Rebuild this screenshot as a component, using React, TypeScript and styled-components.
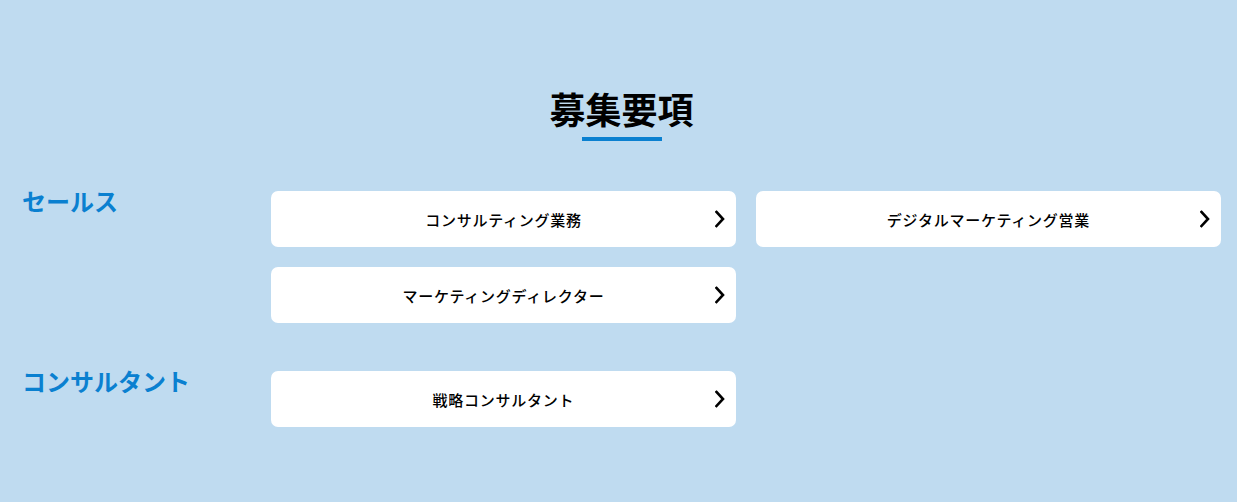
import React from 'react';
import styled, { createGlobalStyle } from 'styled-components';

interface IJobSection {
  category: string;
  jobs: string[];
}

const sections: IJobSection[] = [
  {
    category: 'セールス',
    jobs: ['コンサルティング業務', 'デジタルマーケティング営業', 'マーケティングディレクター'],
  },
  {
    category: 'コンサルタント',
    jobs: ['戦略コンサルタント'],
  },
];

const Chevron: React.FC = () => (
  <ChevronIcon width="10" height="18" viewBox="0 0 10 18" aria-hidden>
    <polyline
      points="1.5,2 8,9 1.5,16"
      fill="none"
      stroke="#000"
      strokeWidth="2.6"
      strokeLinecap="square"
      strokeLinejoin="miter"
    />
  </ChevronIcon>
);

export default function App() {
  return (
    <>
      <GlobalStyle />
      <Page>
        <Heading>
          <Title>募集要項</Title>
          <Underline />
        </Heading>

        {sections.map(section => (
          <Section key={section.category}>
            <Category>{section.category}</Category>
            <JobGrid>
              {section.jobs.map(job => (
                <JobCard key={job} href="#">
                  <JobName>{job}</JobName>
                  <Chevron />
                </JobCard>
              ))}
            </JobGrid>
          </Section>
        ))}
      </Page>
    </>
  );
}

const GlobalStyle = createGlobalStyle`
  body {
    margin: 0;
    background: #bfdbf0;
    font-family: 'Noto Sans CJK JP', 'Noto Sans', sans-serif;
  }
`;

const Page = styled.main`
  min-height: 100vh;
  box-sizing: border-box;
  padding: 88px 16px 76px 22px;
  background: #bfdbf0;
`;

const Heading = styled.div`
  display: flex;
  flex-direction: column;
  align-items: center;
  margin-bottom: 50px;
`;

const Title = styled.h2`
  margin: 0;
  font-size: 36px;
  line-height: 40px;
  font-weight: 700;
  color: #000;
`;

const Underline = styled.span`
  display: block;
  width: 80px;
  height: 4px;
  margin-top: 9px;
  background: #0a80d0;
`;

const Section = styled.section`
  display: grid;
  grid-template-columns: 249px 1fr;
  & + & {
    margin-top: 48px;
  }
`;

const Category = styled.h3`
  margin: -5px 0 0;
  font-size: 24px;
  line-height: 30px;
  font-weight: 700;
  color: #0a80d0;
`;

const JobGrid = styled.div`
  display: grid;
  grid-template-columns: repeat(2, 465px);
  column-gap: 20px;
  row-gap: 20px;
`;

const JobCard = styled.a`
  position: relative;
  display: flex;
  align-items: center;
  justify-content: center;
  height: 56px;
  padding: 0 40px;
  border-radius: 7px;
  background: #fff;
  color: #000;
  text-decoration: none;
`;

const JobName = styled.span`
  font-size: 15px;
  font-weight: 500;
  letter-spacing: 0.05em;
`;

const ChevronIcon = styled.svg`
  position: absolute;
  right: 11px;
  top: 50%;
  transform: translateY(-50%);
`;
